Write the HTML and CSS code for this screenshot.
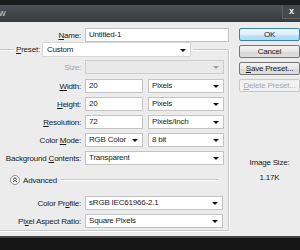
FILE: index.html
```html
<!DOCTYPE html>
<html>
	<head>
		<link rel="stylesheet" href="styles.css">
	</head>
	<body>
		<div class="titlebar">
			<span class="title">New</span>
			<span class="close">x</span>
		</div>

		<div class="dialog">
			<div class="main">
				<div class="row">
					<label><u>N</u>ame:</label>
					<div class="field name">Untitled-1</div>
				</div>

				<fieldset class="group">
					<legend>
						<label><u>P</u>reset:</label>
						<div class="select preset">Custom</div>
					</legend>

					<div class="rows">
						<div class="row">
							<label class="off">Size:</label>
							<div class="select off wide"></div>
						</div>
						<div class="row first-size">
							<label><u>W</u>idth:</label>
							<div class="field num">20</div>
							<div class="select unit">Pixels</div>
						</div>
						<div class="row">
							<label><u>H</u>eight:</label>
							<div class="field num">20</div>
							<div class="select unit">Pixels</div>
						</div>
						<div class="row">
							<label><u>R</u>esolution:</label>
							<div class="field num">72</div>
							<div class="select unit">Pixels/Inch</div>
						</div>
						<div class="row">
							<label>Color <u>M</u>ode:</label>
							<div class="select num">RGB Color</div>
							<div class="select unit">8 bit</div>
						</div>
						<div class="row">
							<label>Background <u>C</u>ontents:</label>
							<div class="select wide">Transparent</div>
						</div>

						<div class="advanced">
							<svg width="10" height="10" viewBox="0 0 10 10">
								<circle cx="5" cy="5" r="4.5" fill="#fafafa" stroke="#8c8c8c"/>
								<path d="M3 4.5 L5 2.8 L7 4.5 M3 7 L5 5.3 L7 7" fill="none" stroke="#333" stroke-width="1"/>
							</svg>
							<span>Advanced</span>
							<div class="rule"></div>
						</div>

						<div class="row">
							<label>Color Pr<u>o</u>file:</label>
							<div class="select wide tight">sRGB IEC61966-2.1</div>
						</div>
						<div class="row">
							<label>Pi<u>x</u>el Aspect Ratio:</label>
							<div class="select wide tight">Square Pixels</div>
						</div>
					</div>
				</fieldset>
			</div>

			<div class="side">
				<div class="btn default">OK</div>
				<div class="btn">Cancel</div>
				<div class="btn"><u>S</u>ave Preset...</div>
				<div class="btn disabled"><u>D</u>elete Preset...</div>

				<div class="info">
					<div>Image Size:</div>
					<div>1.17K</div>
				</div>
			</div>
		</div>

		<div class="taskbar"></div>
	</body>
</html>
```

FILE: styles.css
```css
body {
	margin: 0;
	width: 300px;
	height: 250px;
	overflow: hidden;
	background-color: #151515;
	font-family: "Liberation Sans", Arial, sans-serif;
	font-size: 8px;
	letter-spacing: -0.2px;
	color: #1b1b1b;
}

u {
	text-decoration: underline;
}

.titlebar {
	height: 17px;
	border-top: 5px solid #1b1c1d;
	background: linear-gradient(#4c5257, #363b40);
	display: flex;
	justify-content: space-between;
	color: #c9cdd0;
	font-size: 9px;
}
.title {
	margin-left: -12px;
	line-height: 17px;
}
.close {
	width: 17px;
	height: 13px;
	border: 1px solid #5c6267;
	border-right: none;
	border-top: none;
	background-color: #43484d;
	color: #f2f2f2;
	font-weight: bold;
	font-size: 9px;
	line-height: 12px;
	text-align: center;
}

.dialog {
	height: 214px;
	display: flex;
	background-color: #ececec;
}

.main {
	width: 229px;
	padding-top: 6px;
}

.row {
	display: flex;
	align-items: center;
	height: 14px;
}
.row label {
	width: 81px;
	margin-right: 4px;
	flex: none;
	text-align: right;
	white-space: nowrap;
}
label.off {
	color: #a4a4a4;
}

.field,
.select {
	box-sizing: border-box;
	height: 14px;
	padding-left: 3px;
	line-height: 12px;
	background-color: #fff;
	border: 1px solid #c3c3c3;
	white-space: nowrap;
}
.select {
	position: relative;
}
.select::after {
	content: "";
	position: absolute;
	right: 4px;
	top: 5px;
	border: 3px solid transparent;
	border-top: 3px solid #111;
	border-bottom: 0;
}
.select.off {
	background-color: #e9e9e9;
	border-color: #cdcdcd;
}
.select.off::after {
	border-top-color: #9a9a9a;
}

.field.name {
	width: 144px;
}

.group {
	box-sizing: border-box;
	width: 234px;
	margin: 0 0 0 -6px;
	padding: 3px 4px 2px 5px;
	border: 1px solid #c9c9c9;
	box-shadow: inset 1px 1px 0 #fff, 1px 1px 0 #fff;
}
.group legend {
	display: flex;
	align-items: center;
	margin-left: 14px;
	padding: 0 2px;
}
.group legend label {
	margin-right: 2px;
}
.select.preset {
	width: 149px;
	height: 15px;
	line-height: 13px;
	padding-left: 4px;
	border-color: #d6d6d6;
}
.select.preset::after {
	top: 6px;
}

.rows {
	display: flex;
	flex-direction: column;
	gap: 4px;
}
.first-size {
	margin-top: 1px;
}
.num {
	width: 58px;
	flex: none;
}
.unit {
	width: 76px;
	margin-left: 5px;
	flex: none;
}
.wide {
	flex: 1;
}
.tight {
	margin-right: 1px;
}

.advanced {
	display: flex;
	align-items: center;
	height: 14px;
	margin: 4px 0 5px 10px;
}
.advanced span {
	margin-left: 3px;
}
.rule {
	flex: 1;
	margin: 0 6px 0 4px;
	border-top: 1px solid #c8c8c8;
	border-bottom: 1px solid #fff;
}

.side {
	width: 61px;
	margin-left: 10px;
	padding-top: 6px;
	display: flex;
	flex-direction: column;
	gap: 4px;
}
.btn {
	box-sizing: border-box;
	height: 13px;
	line-height: 11px;
	text-align: center;
	border: 1px solid #767676;
	border-radius: 2px;
	background: linear-gradient(#f4f4f4, #e6e6e6 50%, #d8d8d8 51%, #dedede);
	white-space: nowrap;
}
.btn.default {
	border-color: #3c7fb1;
	background: linear-gradient(#ecf7fd, #dbf0fc 50%, #bfe6fb 51%, #a9daf5);
}
.btn.disabled {
	color: #a8a8a8;
	border-color: #c6c6c6;
	background: #f1f1f1;
}

.info {
	margin-top: 59px;
	text-align: center;
	line-height: 15px;
}

.taskbar {
	height: 12px;
	border-top: 2px solid #444;
	background-color: #161616;
}
```
